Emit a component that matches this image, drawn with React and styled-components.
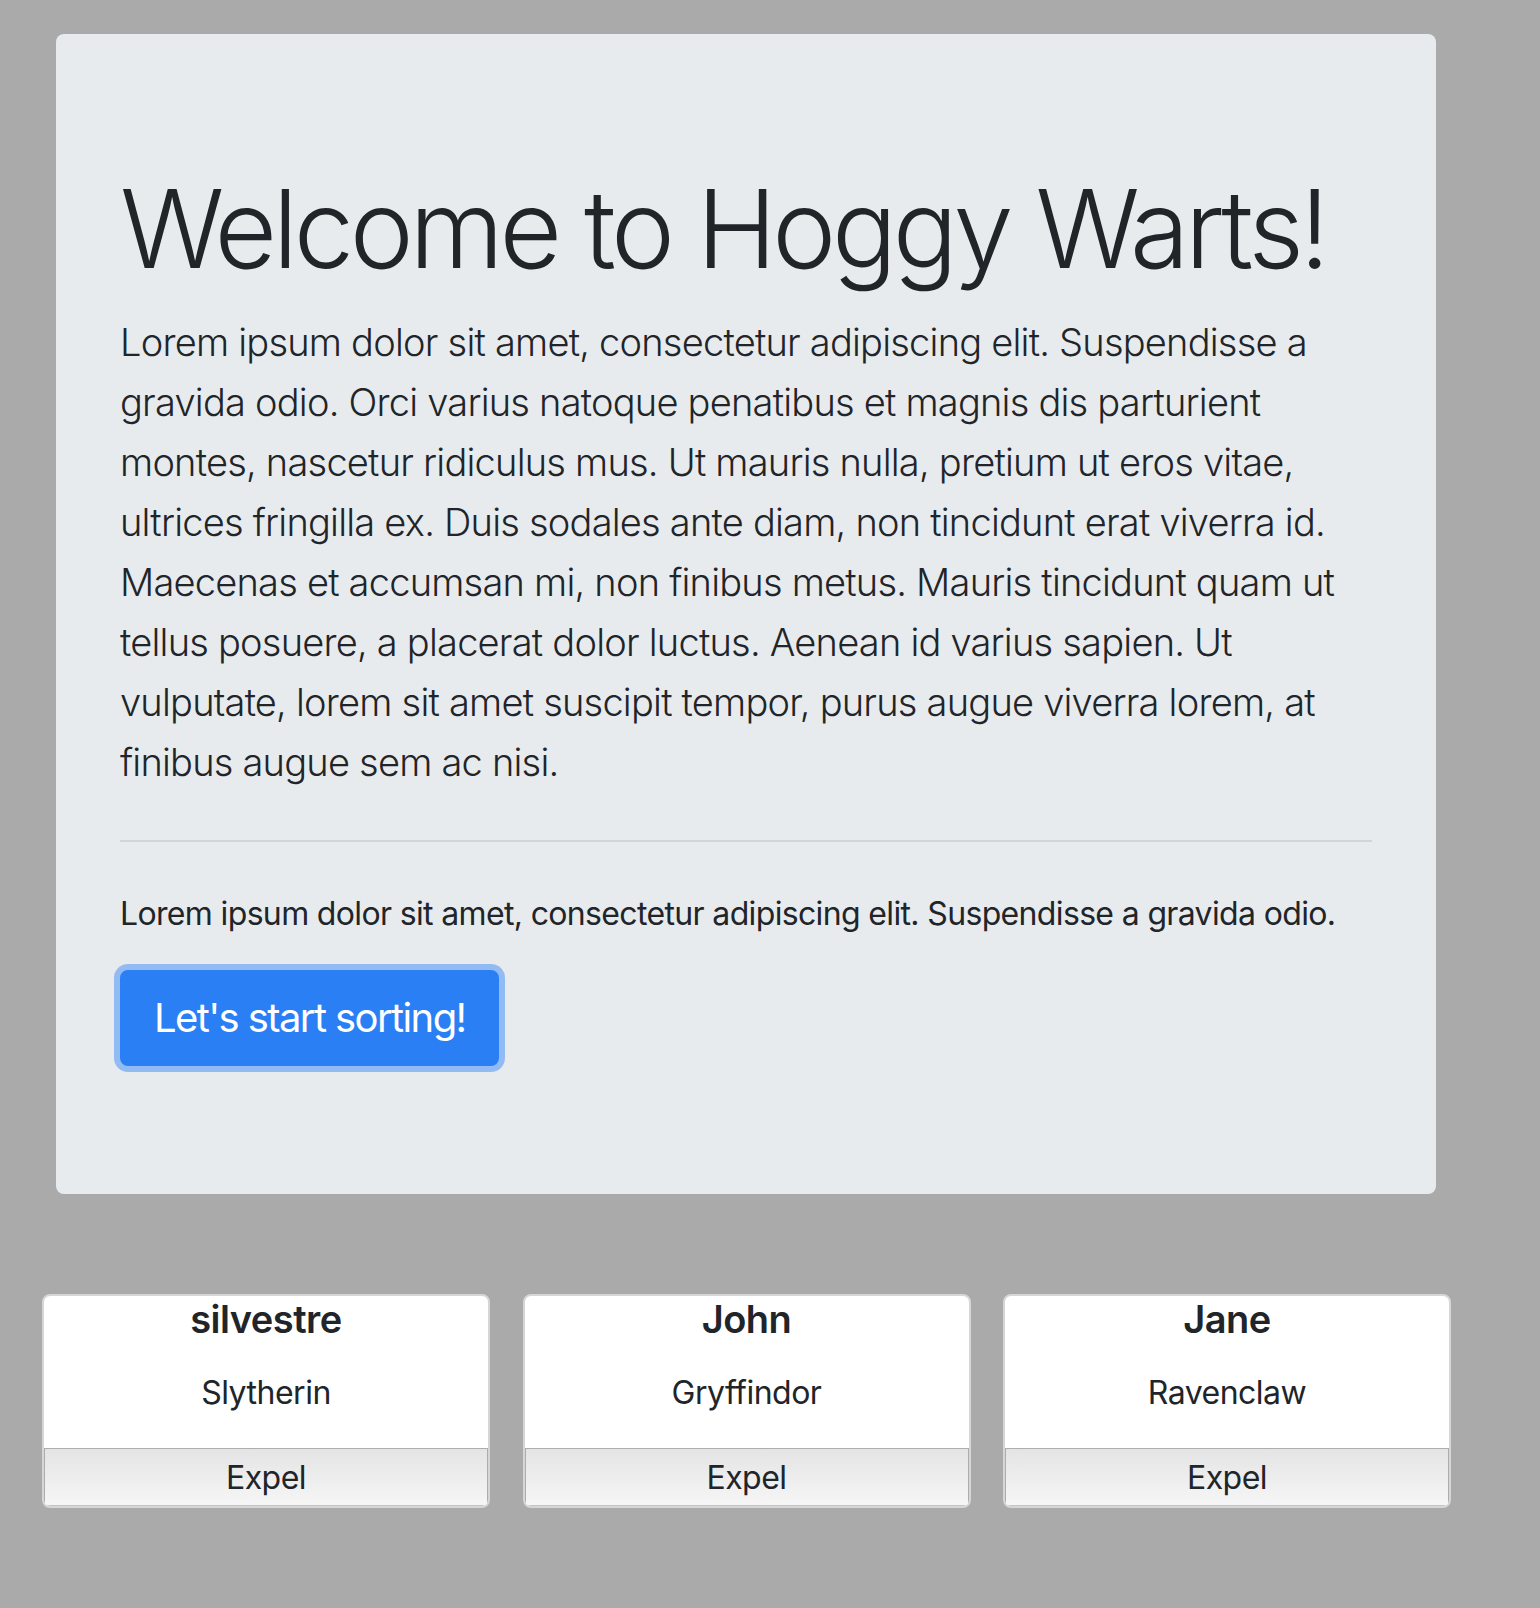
import React from "react";
import styled, { createGlobalStyle } from "styled-components";

const GlobalStyle = createGlobalStyle`
  html, body {
    margin: 0;
    padding: 0;
    background: #aaaaaa;
  }
  body {
    font-family: Inter, "Noto Sans", "Liberation Sans", sans-serif;
    color: #212529;
    min-height: 1608px;
  }
`;

const Page = styled.div`
  padding: 34px 0 60px;
`;

const Jumbotron = styled.section`
  width: 1380px;
  margin: 0 0 100px 56px;
  box-sizing: border-box;
  padding: 128px 64px;
  background: #e8ebee;
  border-radius: 8px;
`;

const Title = styled.h1`
  margin: 0 0 16px;
  font-size: 108px;
  font-weight: 300;
  line-height: 134px;
  letter-spacing: -4.3px;
  white-space: nowrap;
`;

const Lead = styled.p`
  margin: 0;
  font-size: 38px;
  font-weight: 300;
  line-height: 60px;
  letter-spacing: -0.78px;
`;

const Divider = styled.hr`
  margin: 48px 0;
  border: 0;
  border-top: 2px solid #d2d5d8;
`;

const Text = styled.p`
  margin: 0 0 32px;
  font-size: 32px;
  line-height: 48px;
  letter-spacing: -0.65px;
`;

const StartButton = styled.button`
  display: block;
  padding: 16px 32px;
  font-family: inherit;
  font-size: 40px;
  line-height: 60px;
  letter-spacing: -1.6px;
  color: #fff;
  background: #2b7ff5;
  border: 2px solid #2b7ff5;
  border-radius: 8px;
  box-shadow: 0 0 0 6px #93bbf3;
  cursor: pointer;
`;

const Students = styled.div`
  display: grid;
  grid-template-columns: repeat(3, 448px);
  column-gap: 32.5px;
  padding-left: 42px;
`;

const Card = styled.div`
  display: flex;
  flex-direction: column;
  align-items: center;
  height: 214px;
  box-sizing: border-box;
  background: #fff;
  border: 2px solid #d6d6d6;
  border-radius: 8px;
  overflow: hidden;
`;

const Name = styled.h3`
  margin: 0;
  font-size: 38px;
  font-weight: 600;
  line-height: 46px;
  letter-spacing: -0.5px;
`;

const House = styled.p`
  margin: 27px 0 0;
  font-size: 32px;
  line-height: 48px;
  letter-spacing: -0.5px;
`;

const ExpelButton = styled.button`
  margin-top: auto;
  width: 100%;
  height: 58px;
  padding: 0;
  font-family: inherit;
  font-size: 32px;
  letter-spacing: -0.5px;
  color: #212529;
  background: linear-gradient(#e4e4e4, #f6f6f6);
  border: 1px solid #adadad;
  border-bottom-color: #c4c4c4;
  cursor: pointer;
`;

const students = [
  { name: "silvestre", house: "Slytherin" },
  { name: "John", house: "Gryffindor" },
  { name: "Jane", house: "Ravenclaw" },
];

export default function App() {
  return (
    <Page>
      <GlobalStyle />
      <Jumbotron>
        <Title>Welcome to Hoggy Warts!</Title>
        <Lead>
          Lorem ipsum dolor sit amet, consectetur adipiscing elit. Suspendisse a
          gravida odio. Orci varius natoque penatibus et magnis dis parturient
          montes, nascetur ridiculus mus. Ut mauris nulla, pretium ut eros vitae,
          ultrices fringilla ex. Duis sodales ante diam, non tincidunt erat viverra
          id. Maecenas et accumsan mi, non finibus metus. Mauris tincidunt quam ut
          tellus posuere, a placerat dolor luctus. Aenean id varius sapien. Ut
          vulputate, lorem sit amet suscipit tempor, purus augue viverra lorem, at
          finibus augue sem ac nisi.
        </Lead>
        <Divider />
        <Text>
          Lorem ipsum dolor sit amet, consectetur adipiscing elit. Suspendisse a
          gravida odio.
        </Text>
        <StartButton>Let's start sorting!</StartButton>
      </Jumbotron>
      <Students>
        {students.map((s) => (
          <Card key={s.name}>
            <Name>{s.name}</Name>
            <House>{s.house}</House>
            <ExpelButton>Expel</ExpelButton>
          </Card>
        ))}
      </Students>
    </Page>
  );
}
